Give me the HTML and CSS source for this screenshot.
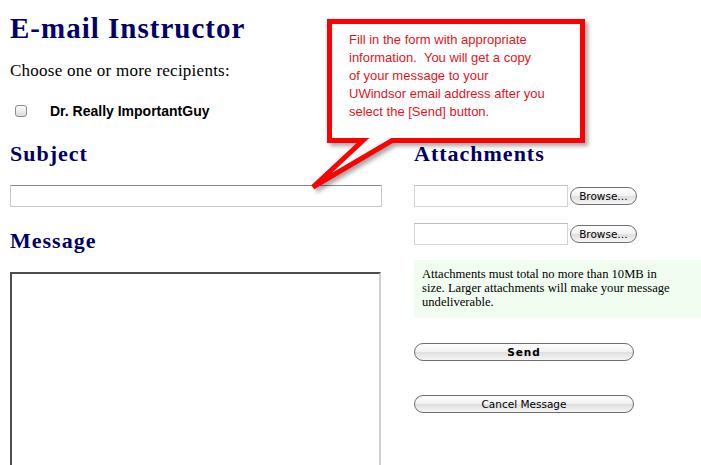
FILE: index.html
```html
<!DOCTYPE HTML>
<html>
<head>
    <meta charset="utf-8">
    <title>E-mail Instructor</title>
    <link rel="stylesheet" href="styles.css">
</head>
<body>
    <div class="page">
        <h1 class="title">E-mail Instructor</h1>
        <p class="intro">Choose one or more recipients:</p>
        <label class="recipient">
            <input type="checkbox" class="check">
            <span class="recipient-name">Dr. Really ImportantGuy</span>
        </label>

        <div class="columns">
            <div class="col-main">
                <h2 class="section">Subject</h2>
                <input type="text" class="subject">
                <h2 class="section section-msg">Message</h2>
                <textarea class="message"></textarea>
            </div>
            <div class="col-side">
                <h2 class="section">Attachments</h2>
                <div class="file-row">
                    <input type="text" class="file-name">
                    <button class="btn browse">Browse…</button>
                </div>
                <div class="file-row">
                    <input type="text" class="file-name">
                    <button class="btn browse">Browse…</button>
                </div>
                <div class="note">
                    Attachments must total no more than 10MB in<br>
                    size. Larger attachments will make your message<br>
                    undeliverable.
                </div>
                <button class="btn wide send">Send</button>
                <button class="btn wide cancel">Cancel Message</button>
            </div>
        </div>

        <!-- callout bubble over the form -->
        <div class="callout">
            <svg class="callout-shape" width="300" height="190" viewBox="300 10 300 190">
                <path d="M329.5 21.5 H582.5 V140.5 H392 L313 187 L363 140.5 H329.5 Z"
                      fill="#fff" stroke="#f00" stroke-width="5" stroke-linejoin="miter"/>
            </svg>
            <div class="callout-text">
                Fill in the form with appropriate<br>
                information.&nbsp; You will get a copy<br>
                of your message to your<br>
                UWindsor email address after you<br>
                select the [Send] button.
            </div>
        </div>
    </div>
</body>
</html>
```

FILE: styles.css
```css
html, body {
    margin: 0;
    padding: 0;
    overflow: hidden;
    background: #fff;
}

.page {
    position: relative;
    padding: 12px 0 0 10px;
    font-family: "Liberation Serif", serif;
    color: #000;
}

.title {
    margin: 0;
    font-size: 29px;
    line-height: 32px;
    letter-spacing: 1px;
    color: #000066;
}

.intro {
    margin: 17px 0 0 0;
    font-size: 17px;
    line-height: 20px;
    letter-spacing: 0.25px;
}

.recipient {
    display: flex;
    align-items: center;
    height: 24px;
    margin-top: 18px;
}

.check {
    appearance: none;
    -webkit-appearance: none;
    width: 12px;
    height: 12px;
    margin: 0 0 0 5px;
    border: 1px solid #8c8c8c;
    border-radius: 3px;
    background: linear-gradient(#fdfdfd, #dcdcdc);
    box-sizing: border-box;
}

.recipient-name {
    margin-left: 23px;
    font-family: "Liberation Sans", Arial, sans-serif;
    font-weight: bold;
    font-size: 14px;
}

.columns {
    display: grid;
    grid-template-columns: 372px 1fr;
    column-gap: 32px;
    margin-top: 18px;
}

.col-main, .col-side {
    display: flex;
    flex-direction: column;
    align-items: flex-start;
}

.section {
    margin: 0;
    font-size: 22px;
    line-height: 26px;
    letter-spacing: 1px;
    color: #000066;
}

.subject {
    width: 372px;
    height: 22px;
    margin: 18px 0 0 0;
    padding: 0;
    box-sizing: border-box;
    border: 1px solid #c8c8c8;
    border-top-color: #8a8a8a;
}

.section-msg {
    margin-top: 21px;
}

.message {
    width: 371px;
    height: 210px;
    margin: 18px 0 0 0;
    padding: 0;
    box-sizing: border-box;
    resize: none;
    border-style: solid;
    border-width: 2px 2px 0 2px;
    border-color: #4d4d4d #d0d0d0 #d0d0d0 #4d4d4d;
}

.file-row {
    display: flex;
    align-items: center;
    margin-top: 18px;
}

.file-row + .file-row {
    margin-top: 16px;
}

.file-name {
    width: 154px;
    height: 22px;
    margin: 0;
    padding: 0;
    box-sizing: border-box;
    border: 1px solid #d4d4d4;
    border-top-color: #bdbdbd;
}

.btn {
    height: 18px;
    padding: 0;
    box-sizing: border-box;
    border: 1px solid #6e6e6e;
    border-radius: 9px;
    background: linear-gradient(#ffffff 0%, #f1f1f1 50%, #dedede 51%, #f6f6f6 100%);
    font-family: "DejaVu Sans", sans-serif;
    font-size: 10.5px;
    line-height: 16px;
    color: #000;
}

.browse {
    width: 67px;
    margin-left: 2px;
}

.note {
    box-sizing: border-box;
    width: 300px;
    margin-top: 15px;
    padding: 7px 8px 9px 8px;
    background: #f0fdf0;
    font-size: 12.6px;
    line-height: 14px;
    white-space: nowrap;
}

.wide {
    width: 220px;
}

.send {
    margin-top: 25px;
    font-weight: bold;
    letter-spacing: 1px;
}

.cancel {
    margin-top: 34px;
}

.callout {
    position: absolute;
    left: 300px;
    top: 10px;
    width: 300px;
    height: 190px;
}

.callout-shape {
    display: block;
    filter: drop-shadow(3px 3px 2px rgba(0, 0, 0, 0.35));
}

.callout-text {
    position: absolute;
    left: 49px;
    top: 21px;
    font-family: "Liberation Sans", Arial, sans-serif;
    font-size: 13px;
    line-height: 18px;
    color: #e8141c;
}
```
